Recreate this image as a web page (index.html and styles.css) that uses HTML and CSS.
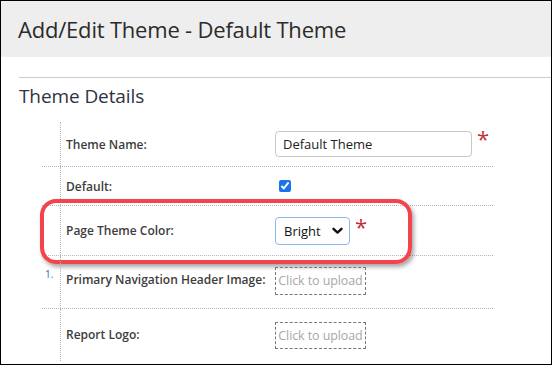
FILE: index.html
```html
<!DOCTYPE html>
<html>
<head>
<meta charset="utf-8">
<link rel="stylesheet" href="styles.css">
</head>
<body>
<div class="frame">
  <div class="header"><h1 class="title">Add/Edit Theme - Default Theme</h1></div>
  <div class="section">
    <h2 class="section-title">Theme Details</h2>
    <div class="form">
      <div class="row row-name">
        <div class="num"></div>
        <div class="label">Theme Name:</div>
        <div class="field">
          <div class="text-input">Default Theme</div>
          <span class="req">*</span>
        </div>
      </div>
      <div class="row row-default">
        <div class="num"></div>
        <div class="label">Default:</div>
        <div class="field"><input class="check" type="checkbox" checked></div>
      </div>
      <div class="row row-color">
        <div class="num"></div>
        <div class="label">Page Theme Color:</div>
        <div class="field">
          <div class="select"><span>Bright</span>
            <svg class="chev" width="11" height="8" viewBox="0 0 11 8"><path d="M1.5 1.8 L5.5 5.6 L9.5 1.8" fill="none" stroke="#111" stroke-width="2.4" stroke-linecap="round" stroke-linejoin="round"/></svg>
          </div>
          <span class="req req-sel">*</span>
        </div>
        <div class="highlight"></div>
      </div>
      <div class="row row-nav">
        <div class="num"><span class="num-text">1.</span></div>
        <div class="label">Primary Navigation Header Image:</div>
        <div class="field"><div class="upload">Click to upload</div></div>
      </div>
      <div class="row row-logo">
        <div class="num"></div>
        <div class="label">Report Logo:</div>
        <div class="field"><div class="upload">Click to upload</div></div>
      </div>
    </div>
  </div>
</div>
</body>
</html>
```
FILE: styles.css
```css
* { box-sizing: border-box; }
html, body { margin: 0; padding: 0; background: #fff; }
body { font-family: "Open Sans", "Liberation Sans", sans-serif; color: #333; }
.frame {
  width: 552px; height: 365px; border: 1px solid #000; overflow: hidden; background: #fff;
}
.header {
  height: 56px; background: #eeeeee; display: flex; align-items: center; padding-left: 17px;
}
.title { margin: 0; font-size: 22px; font-weight: 400; color: #2b2b2b; letter-spacing: -0.2px; }
.section { padding-left: 18px; margin-top: 20px; }
.section-title {
  margin: 0; border-top: 1px solid #cccccc; font-size: 19px; font-weight: 400; color: #2e3340;
  padding-top: 5px; height: 45px; letter-spacing: -0.1px;
}
.form { margin-left: 23px; width: 451px; }
.row {
  position: relative; display: grid; grid-template-columns: 19px 214px 1fr; border-bottom: 1px dotted #b5b5b5;
}
.row-logo { border-bottom: none; }
.row-name { height: 45px; }
.row-default { height: 39px; }
.row-color { height: 50px; }
.row-nav { height: 53px; }
.row-logo { height: 52px; }
.num { border-right: 1px dotted #b5b5b5; position: relative; }
.num-text { position: absolute; left: 3px; top: 11px; font-size: 10px; color: #4a6a9a; }
.label {
  display: flex; align-items: center; padding-left: 5px; font-size: 12px; font-weight: 600; color: #3d3d3d;
}
.row-nav .label { padding-bottom: 5px; }
.row-logo .label { padding-bottom: 2px; }
.field { display: flex; align-items: center; position: relative; }
.text-input {
  width: 197px; height: 26px; border: 1px solid #c8c8c8; border-radius: 4px; font-size: 13px; color: #222;
  padding-left: 7px; display: flex; align-items: center;
}
.req { color: #c0303a; font-size: 22px; line-height: 1; align-self: flex-start; margin-top: 5px; margin-left: 5px; }
.req-sel { margin-top: 9px; }
.check { margin: 0 0 0 4px; width: 12px; height: 12px; accent-color: #1a73e8; }
.select {
  width: 75px; height: 28px; border: 1px solid #8db9ec; border-radius: 4px; display: flex; align-items: center;
  justify-content: space-between; padding: 0 6px 0 8px; font-size: 13px; color: #111; margin-top: 1px;
}
.row-nav .field { padding-bottom: 3px; }
.upload {
  width: 91px; height: 28px; border: 1px dashed #777; font-size: 12.5px; color: #a8a8a8; display: flex;
  align-items: center; justify-content: center; letter-spacing: -0.1px;
}
.row-logo .upload { height: 27px; }
.highlight {
  position: absolute; left: -2px; top: -7px; width: 372px; height: 65px; border: 4px solid #f2444a;
  border-radius: 16px; box-shadow: 2px 3px 4px rgba(0,0,0,0.35); pointer-events: none;
}
```
